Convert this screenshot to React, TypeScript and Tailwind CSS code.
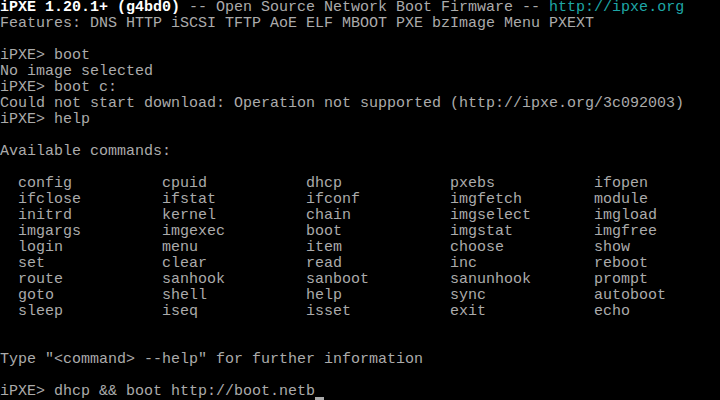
const commands = [
  "config", "cpuid", "dhcp", "pxebs", "ifopen",
  "ifclose", "ifstat", "ifconf", "imgfetch", "module",
  "initrd", "kernel", "chain", "imgselect", "imgload",
  "imgargs", "imgexec", "boot", "imgstat", "imgfree",
  "login", "menu", "item", "choose", "show",
  "set", "clear", "read", "inc", "reboot",
  "route", "sanhook", "sanboot", "sanunhook", "prompt",
  "goto", "shell", "help", "sync", "autoboot",
  "sleep", "iseq", "isset", "exit", "echo",
];

function Line({ children }: { children?: React.ReactNode }) {
  return <div className="h-4 whitespace-pre">{children}</div>;
}

export default function App() {
  return (
    <div className="w-[720px] h-[400px] overflow-hidden bg-black text-[#ababab] font-['Liberation_Mono',monospace] text-[15px] leading-4">
      <Line>
        <span className="text-white font-bold">iPXE 1.20.1+ (g4bd0)</span> -- Open Source Network Boot Firmware --{" "}
        <span className="text-[#1ea6a6]">http://ipxe.org</span>
      </Line>
      <Line>Features: DNS HTTP iSCSI TFTP AoE ELF MBOOT PXE bzImage Menu PXEXT</Line>
      <Line />
      <Line>iPXE&gt; boot</Line>
      <Line>No image selected</Line>
      <Line>iPXE&gt; boot c:</Line>
      <Line>Could not start download: Operation not supported (http://ipxe.org/3c092003)</Line>
      <Line>iPXE&gt; help</Line>
      <Line />
      <Line>Available commands:</Line>
      <Line />
      <div className="grid grid-cols-[repeat(5,144px)] pl-[18px]">
        {commands.map((c) => (
          <div key={c} className="h-4 whitespace-pre">
            {c}
          </div>
        ))}
      </div>
      <Line />
      <Line />
      <Line>Type "&lt;command&gt; --help" for further information</Line>
      <Line />
      <div className="h-4 flex whitespace-pre">
        <span>iPXE&gt; dhcp &amp;&amp; boot http://boot.netb</span>
        <span className="w-[9px] h-4 flex flex-col justify-end">
          <span className="block h-[3px] bg-[#ababab]" />
        </span>
      </div>
    </div>
  );
}
